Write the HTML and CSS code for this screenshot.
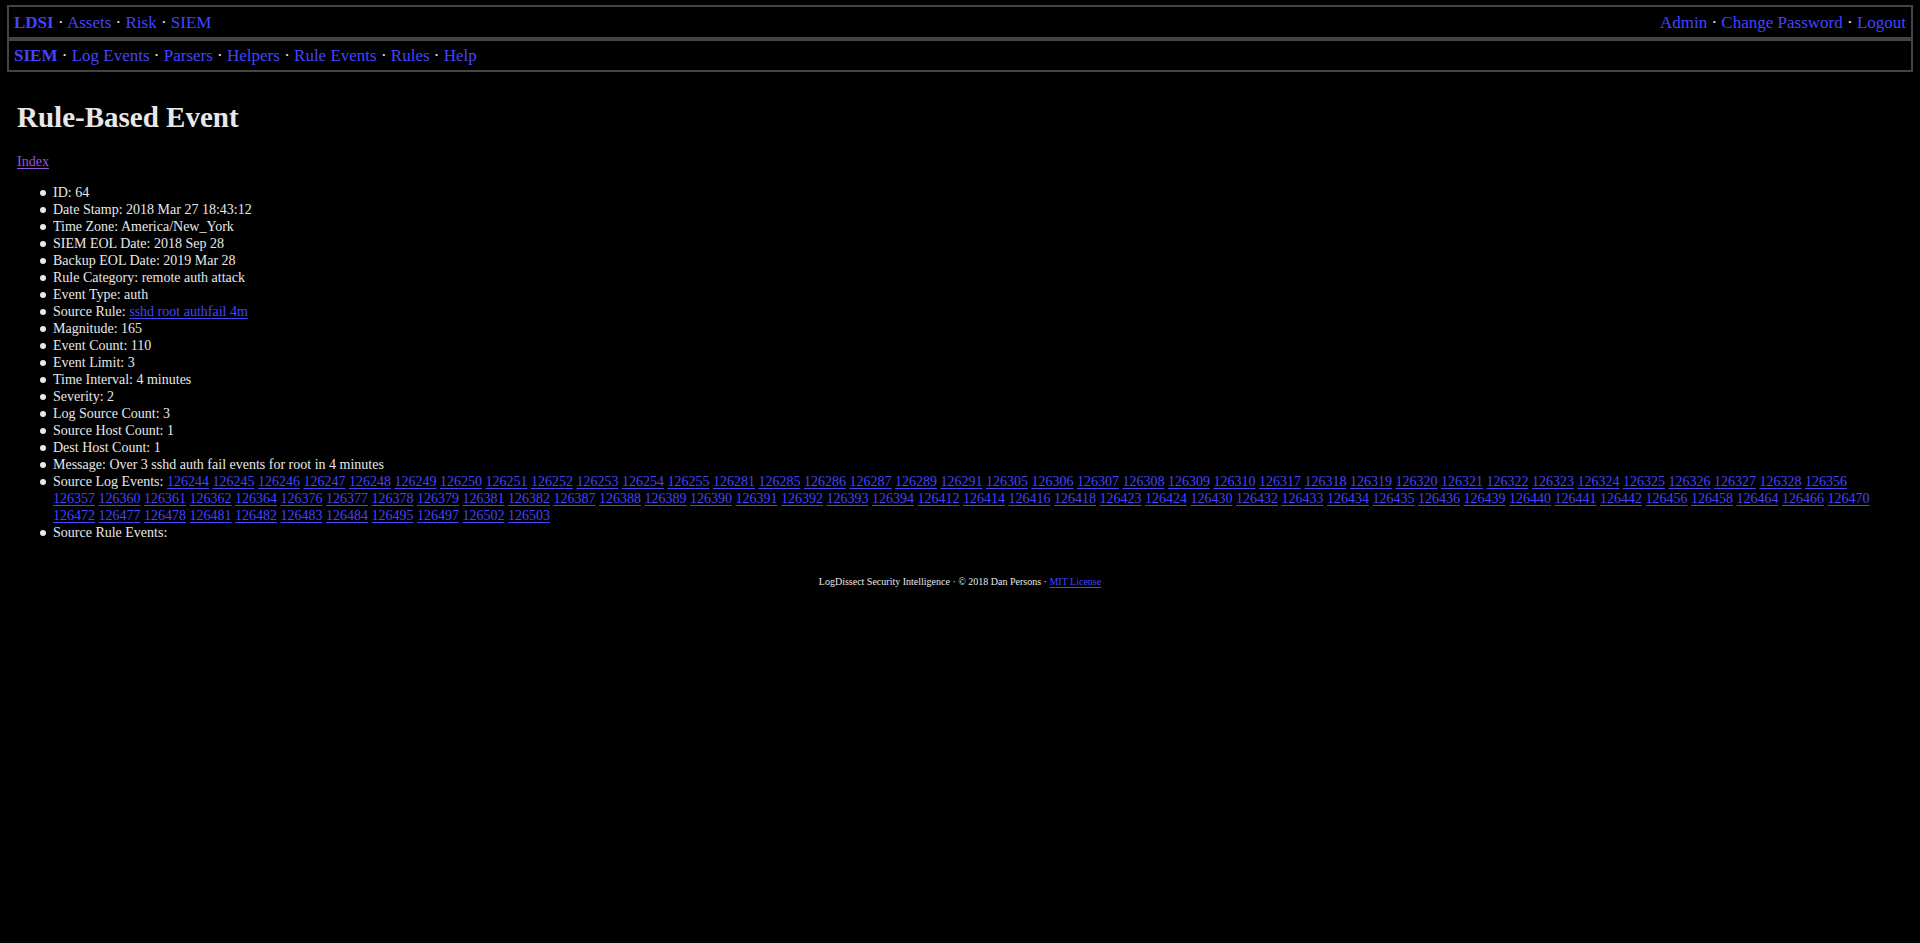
FILE: index.html
```
<!DOCTYPE html>
<html lang="en">
<head>
<meta charset="utf-8">
<title>Rule-Based Event</title>
<link rel="stylesheet" href="styles.css">
</head>
<body>
<header>
<nav class="bar bar-main" aria-label="Main">
<div><a class="brand" href="#">LDSI</a> · <a href="#">Assets</a> · <a href="#">Risk</a> · <a href="#">SIEM</a></div>
<div><a href="#">Admin</a> · <a href="#">Change Password</a> · <a href="#">Logout</a></div>
</nav>
<nav class="bar" aria-label="SIEM">
<div><a class="brand" href="#">SIEM</a> · <a href="#">Log Events</a> · <a href="#">Parsers</a> · <a href="#">Helpers</a> · <a href="#">Rule Events</a> · <a href="#">Rules</a> · <a href="#">Help</a></div>
</nav>
</header>
<main class="content">
<h1 class="title">Rule-Based Event</h1>
<p class="index"><a class="visited" href="#">Index</a></p>
<ul class="details">
<li>ID: 64</li>
<li>Date Stamp: 2018 Mar 27 18:43:12</li>
<li>Time Zone: America/New_York</li>
<li>SIEM EOL Date: 2018 Sep 28</li>
<li>Backup EOL Date: 2019 Mar 28</li>
<li>Rule Category: remote auth attack</li>
<li>Event Type: auth</li>
<li>Source Rule: <a href="#">sshd root authfail 4m</a></li>
<li>Magnitude: 165</li>
<li>Event Count: 110</li>
<li>Event Limit: 3</li>
<li>Time Interval: 4 minutes</li>
<li>Severity: 2</li>
<li>Log Source Count: 3</li>
<li>Source Host Count: 1</li>
<li>Dest Host Count: 1</li>
<li>Message: Over 3 sshd auth fail events for root in 4 minutes</li>
<li>Source Log Events:
<a href="#">126244</a> <a href="#">126245</a> <a href="#">126246</a> <a href="#">126247</a> <a href="#">126248</a> <a href="#">126249</a> <a href="#">126250</a> <a href="#">126251</a> <a href="#">126252</a> <a href="#">126253</a>
<a href="#">126254</a> <a href="#">126255</a> <a href="#">126281</a> <a href="#">126285</a> <a href="#">126286</a> <a href="#">126287</a> <a href="#">126289</a> <a href="#">126291</a> <a href="#">126305</a> <a href="#">126306</a>
<a href="#">126307</a> <a href="#">126308</a> <a href="#">126309</a> <a href="#">126310</a> <a href="#">126317</a> <a href="#">126318</a> <a href="#">126319</a> <a href="#">126320</a> <a href="#">126321</a> <a href="#">126322</a>
<a href="#">126323</a> <a href="#">126324</a> <a href="#">126325</a> <a href="#">126326</a> <a href="#">126327</a> <a href="#">126328</a> <a href="#">126356</a> <a href="#">126357</a> <a href="#">126360</a> <a href="#">126361</a>
<a href="#">126362</a> <a href="#">126364</a> <a href="#">126376</a> <a href="#">126377</a> <a href="#">126378</a> <a href="#">126379</a> <a href="#">126381</a> <a href="#">126382</a> <a href="#">126387</a> <a href="#">126388</a>
<a href="#">126389</a> <a href="#">126390</a> <a href="#">126391</a> <a href="#">126392</a> <a href="#">126393</a> <a href="#">126394</a> <a href="#">126412</a> <a href="#">126414</a> <a href="#">126416</a> <a href="#">126418</a>
<a href="#">126423</a> <a href="#">126424</a> <a href="#">126430</a> <a href="#">126432</a> <a href="#">126433</a> <a href="#">126434</a> <a href="#">126435</a> <a href="#">126436</a> <a href="#">126439</a> <a href="#">126440</a>
<a href="#">126441</a> <a href="#">126442</a> <a href="#">126456</a> <a href="#">126458</a> <a href="#">126464</a> <a href="#">126466</a> <a href="#">126470</a> <a href="#">126472</a> <a href="#">126477</a> <a href="#">126478</a>
<a href="#">126481</a> <a href="#">126482</a> <a href="#">126483</a> <a href="#">126484</a> <a href="#">126495</a> <a href="#">126497</a> <a href="#">126502</a> <a href="#">126503</a></li>
<li>Source Rule Events:</li>
</ul>
</main>
<footer class="footer">LogDissect Security Intelligence · © 2018 Dan Persons · <a href="#">MIT License</a></footer>
</body>
</html>
```
FILE: styles.css
```
body {
  margin: 5px 7px;
  background: #000;
  color: #e8e8e8;
  font-family: "Liberation Serif", "Times New Roman", serif;
  font-size: 14px;
  line-height: 17px;
}

a {
  color: #4444ff;
  text-decoration-thickness: 1px;
  text-decoration-skip-ink: none;
  text-underline-offset: 2px;
}

.bar {
  display: flex;
  justify-content: space-between;
  padding: 5px;
  border: 2px solid #444;
  font-size: 17px;
  line-height: 19px;
}

.bar-main {
  padding-top: 6px;
}

.bar a {
  text-decoration: none;
}

.brand {
  font-weight: bold;
}

.content {
  padding: 0 10px;
}

.title {
  margin: 28px 0 19px;
  font-size: 29px;
  line-height: 34px;
}

.index {
  margin: 0 0 14px;
}

.visited {
  color: #9955dd;
}

.details {
  margin: 0;
  padding: 0 20px 0 36px;
  list-style: none;
}

/* Round bullet hanging in the list's left padding */
.details li::before {
  content: "";
  display: inline-block;
  width: 6px;
  height: 6px;
  margin: 0 7px 0 -13px;
  border-radius: 50%;
  background: #e8e8e8;
  vertical-align: 1px;
}

.footer {
  margin-top: 35px;
  font-size: 10px;
  line-height: 12px;
  text-align: center;
}
```
